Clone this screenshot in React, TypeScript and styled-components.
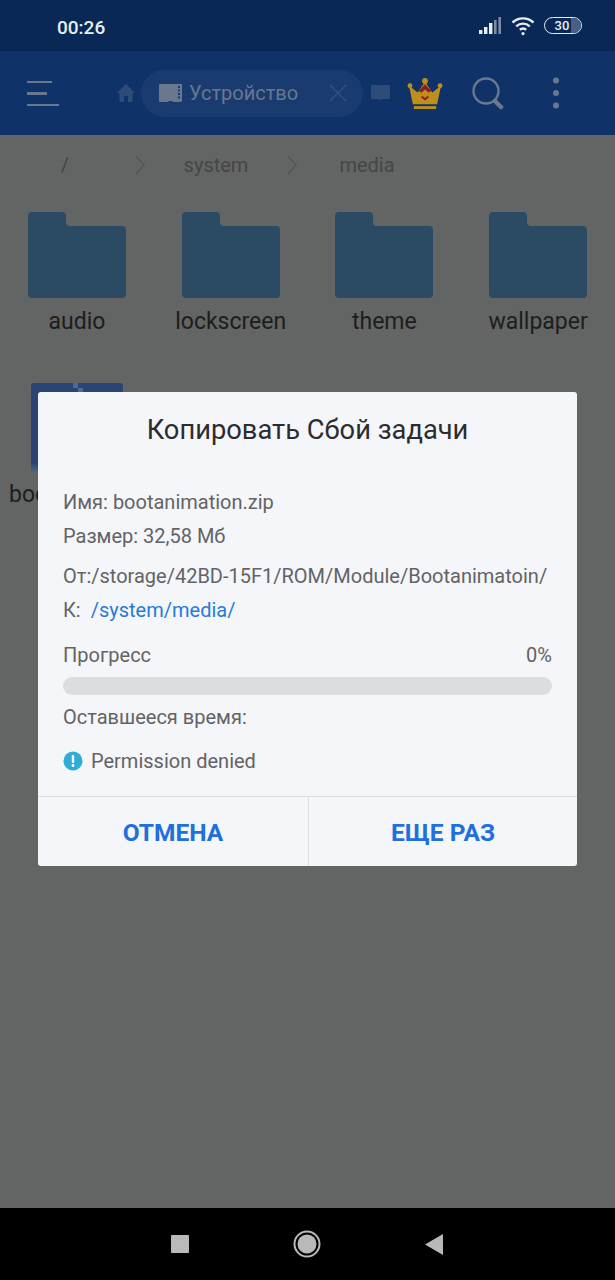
import React from "react";
import styled, { createGlobalStyle } from "styled-components";

const GlobalStyle = createGlobalStyle`
  html, body {
    margin: 0;
    padding: 0;
    background: #000;
  }
  * {
    box-sizing: border-box;
  }
`;

const FONT = `Roboto, "Liberation Sans", sans-serif`;

const Screen = styled.div`
  position: relative;
  width: 615px;
  height: 1280px;
  display: flex;
  flex-direction: column;
  overflow: hidden;
  font-family: ${FONT};
  background: #636564;
`;

const StatusBar = styled.div`
  height: 51px;
  flex: none;
  display: flex;
  align-items: center;
  justify-content: space-between;
  padding: 3px 33px 0 57px;
  background: #0a2855;
`;

const Clock = styled.span`
  font-size: 19px;
  font-weight: 500;
  color: #e8edf4;
`;

const StatusIcons = styled.div`
  display: flex;
  align-items: center;
  gap: 9px;
  margin-top: -3px;
`;

const Battery = styled.div`
  position: relative;
  width: 38px;
  height: 17px;
  border: 1.5px solid #e8edf4;
  border-radius: 9px;
  display: flex;
  align-items: center;
  justify-content: center;
  padding-right: 2px;
  font-size: 13px;
  font-weight: 500;
  color: #e8edf4;
  overflow: hidden;
`;

const BatteryEmpty = styled.span`
  position: absolute;
  top: 0;
  right: 0;
  bottom: 0;
  width: 10px;
  background: #4a5f80;
`;

const BatteryLabel = styled.span`
  position: relative;
`;

const AppBar = styled.div`
  height: 84px;
  flex: none;
  display: flex;
  align-items: center;
  padding: 0 0 0 27px;
  background: #0f3369;
`;

const MenuButton = styled.div`
  width: 32px;
  display: flex;
  flex-direction: column;
  gap: 9px;
  margin-right: 58px;
  margin-top: 1px;
`;

const MenuLine = styled.span<{ $w: number }>`
  display: block;
  height: 2.5px;
  width: ${({ $w }) => $w}px;
  background: #69778f;
`;

const DeviceTab = styled.div`
  width: 222px;
  height: 47px;
  margin: 0 8px 0 6px;
  border-radius: 24px;
  display: flex;
  align-items: center;
  padding-left: 18px;
  background: #1a3b6f;
  font-size: 20px;
  color: #69778f;
`;

const DeviceTabText = styled.span`
  margin-left: 7px;
  flex: 1;
`;

const DeviceClose = styled.svg`
  margin-right: 16px;
`;

const CrownIcon = styled.svg`
  margin-left: 17px;
`;

const SearchIcon = styled.svg`
  margin-left: 29px;
`;

const MoreIcon = styled.svg`
  margin-left: 48px;
`;

const PathBar = styled.div`
  display: grid;
  grid-template-columns: 130px 20px 132px 20px 130px;
  align-items: center;
  height: 60px;
  font-size: 20px;
  color: #454646;
`;

const Crumb = styled.span`
  justify-self: center;
`;

const Chevron = styled.svg`
  justify-self: center;
`;

const FileGrid = styled.div`
  display: grid;
  grid-template-columns: repeat(4, 98px);
  column-gap: 55.7px;
  row-gap: 46px;
  padding: 17px 0 0 28px;
`;

const FileCell = styled.div`
  position: relative;
  width: 98px;
  display: flex;
  flex-direction: column;
  align-items: center;
`;

const FileName = styled.span`
  margin-top: 9px;
  font-size: 23px;
  line-height: 30px;
  color: #1c1d1d;
  white-space: nowrap;
`;

const ArchiveThumb = styled.div`
  position: relative;
  width: 92px;
  height: 91px;
  border-radius: 3px;
  background: linear-gradient(#2a4574 0 88%, #5c6a80 100%);
`;

const ArchiveZipper = styled.svg`
  position: absolute;
  top: 0;
  left: 42px;
`;

const ArchiveName = styled(FileName)`
  align-self: flex-start;
  margin-left: -19px;
  margin-top: 6px;
`;

const NavBar = styled.div`
  position: absolute;
  left: 0;
  right: 0;
  bottom: 0;
  height: 72px;
  display: flex;
  align-items: center;
  justify-content: center;
  gap: 104px;
  padding-right: 2px;
  background: #000;
`;

const Dialog = styled.div`
  position: absolute;
  left: 38px;
  top: 392px;
  width: 539px;
  height: 474px;
  display: flex;
  flex-direction: column;
  border-radius: 3px;
  background: #f4f6f9;
`;

const DialogTitle = styled.div`
  height: 76px;
  flex: none;
  display: flex;
  align-items: center;
  justify-content: center;
  font-size: 27.3px;
  color: #2c2c2e;
`;

const DialogBody = styled.div`
  flex: 1;
  display: flex;
  flex-direction: column;
  padding: 17px 25px 0;
  font-size: 20px;
  color: #636366;
`;

const InfoRow = styled.div<{ $h: number }>`
  height: ${({ $h }) => $h}px;
  flex: none;
  display: flex;
  align-items: center;
  white-space: nowrap;
`;

const ProgressRow = styled(InfoRow)`
  justify-content: space-between;
  margin-top: 12px;
`;

const PathLink = styled.span`
  margin-left: 10px;
  color: #2a79d8;
`;

const ProgressTrack = styled.div`
  height: 18px;
  flex: none;
  border-radius: 9px;
  background: #dcdddf;
`;

const ErrorIcon = styled.svg`
  margin-right: 8px;
`;

const DialogActions = styled.div`
  height: 70px;
  flex: none;
  display: grid;
  grid-template-columns: 270px 1fr;
  border-top: 1px solid #dcdde0;
`;

const ActionButton = styled.div`
  display: flex;
  align-items: center;
  justify-content: center;
  padding-top: 2px;
  font-size: 24.5px;
  font-weight: 700;
  color: #1f6fdc;
  & + & {
    border-left: 1px solid #dcdde0;
  }
`;

function Folder() {
  return (
    <svg width="98" height="86" viewBox="0 0 98 86">
      <path
        d="M4 0h30q4 0 4 4v6q0 4 4 4h52q4 0 4 4v64q0 4-4 4H4q-4 0-4-4V4q0-4 4-4z"
        fill="#2a4b63"
      />
    </svg>
  );
}

function PathChevron() {
  return (
    <Chevron width="12" height="20" viewBox="0 0 12 20" fill="none" stroke="#555756" strokeWidth="1.5">
      <path d="M2 1l8 9-8 9" />
    </Chevron>
  );
}

const folders = ["audio", "lockscreen", "theme", "wallpaper"];

export default function App() {
  return (
    <>
      <GlobalStyle />
      <Screen>
        <StatusBar>
          <Clock>00:26</Clock>
          <StatusIcons>
            <svg width="24" height="18" viewBox="0 0 24 18">
              <rect x="1" y="13" width="3.4" height="4" fill="#e8edf4" />
              <rect x="6" y="10" width="3.4" height="7" fill="#e8edf4" />
              <rect x="11" y="6" width="3.4" height="11" fill="#e8edf4" />
              <rect x="16" y="3" width="2.6" height="14" fill="#7d8ca3" />
              <rect x="20.4" y="0" width="2.6" height="17" fill="#7d8ca3" />
            </svg>
            <svg width="24" height="20" viewBox="0 0 24 20" fill="none" stroke="#e8edf4" strokeWidth="2.4">
              <path d="M1.5 6.5C7.5 1 16.5 1 22.5 6.5" />
              <path d="M5.2 10.3c4-3.6 9.6-3.6 13.6 0" />
              <path d="M8.8 13.8c2-1.6 4.4-1.6 6.4 0" />
              <circle cx="12" cy="17.6" r="1.6" fill="#e8edf4" stroke="none" />
            </svg>
            <Battery>
              <BatteryEmpty />
              <BatteryLabel>30</BatteryLabel>
            </Battery>
          </StatusIcons>
        </StatusBar>

        <AppBar>
          <MenuButton>
            <MenuLine $w={25} />
            <MenuLine $w={20} />
            <MenuLine $w={32} />
          </MenuButton>
          <svg width="18" height="18" viewBox="0 0 18 18">
            <path d="M9 0l9 9h-2.4v9h-4.6v-6H7v6H2.4V9H0z" fill="#2f4c78" />
          </svg>
          <DeviceTab>
            <svg width="23" height="19" viewBox="0 0 23 19">
              <path d="M1 0h21q1 0 1 1v16q0 1-1 1h-8l-1-1h-3l-1 1H1q-1 0-1-1V1q0-1 1-1z" fill="#69778f" />
              <path d="M20 2v14" stroke="#1a3b6f" strokeWidth="2" strokeDasharray="2 1.5" />
            </svg>
            <DeviceTabText>Устройство</DeviceTabText>
            <DeviceClose width="18" height="18" viewBox="0 0 18 18" stroke="#33507c" strokeWidth="1.5">
              <path d="M1 1l16 16M17 1L1 17" />
            </DeviceClose>
          </DeviceTab>
          <svg width="19" height="16" viewBox="0 0 19 16">
            <path d="M1 0h17q1 0 1 1v12q0 1-1 1h-7l-1.5 1.5L8 14H1q-1 0-1-1V1q0-1 1-1z" fill="#2f4c78" />
          </svg>
          <CrownIcon width="36" height="33" viewBox="0 0 37 34">
            <path d="M6 28L2 9l9 7 7.5-11L26 16l9-7-4 19z" fill="#bd8f1e" />
            <path d="M12 14.500l6.500-7 6.500 7-3 1.500-3.500-3-3.500 3z" fill="#8b1e22" />
            <path d="M15 20l3.500 3 3.500-3" fill="none" stroke="#8b1e22" strokeWidth="2" />
            <rect x="7" y="30" width="23" height="3" fill="#bd8f1e" />
            <circle cx="18.5" cy="4" r="3" fill="#bd8f1e" />
            <circle cx="3" cy="9" r="2.5" fill="#bd8f1e" />
            <circle cx="34" cy="9" r="2.5" fill="#bd8f1e" />
          </CrownIcon>
          <SearchIcon width="32" height="33" viewBox="0 0 32 33" fill="none" stroke="#69778f">
            <circle cx="14" cy="14" r="12.5" strokeWidth="2.4" />
            <path d="M23 24l6 6" strokeWidth="4.5" strokeLinecap="round" />
          </SearchIcon>
          <MoreIcon width="8" height="32" viewBox="0 0 8 32" fill="#69778f">
            <circle cx="4" cy="3.5" r="3" />
            <circle cx="4" cy="16" r="3" />
            <circle cx="4" cy="28.5" r="3" />
          </MoreIcon>
        </AppBar>

        <PathBar>
          <Crumb>/</Crumb>
          <PathChevron />
          <Crumb>system</Crumb>
          <PathChevron />
          <Crumb>media</Crumb>
        </PathBar>

        <FileGrid>
          {folders.map((name) => (
            <FileCell key={name}>
              <Folder />
              <FileName>{name}</FileName>
            </FileCell>
          ))}
          <FileCell>
            <ArchiveThumb>
              <ArchiveZipper width="12" height="28" viewBox="0 0 12 28" fill="#4f6a94">
                <rect x="0" y="0" width="5" height="5" />
                <rect x="5" y="5" width="5" height="5" />
                <rect x="0" y="10" width="5" height="5" />
                <rect x="5" y="15" width="5" height="5" />
              </ArchiveZipper>
            </ArchiveThumb>
            <ArchiveName>boo</ArchiveName>
          </FileCell>
        </FileGrid>

        <Dialog>
          <DialogTitle>Копировать Сбой задачи</DialogTitle>
          <DialogBody>
            <InfoRow $h={34}>Имя: bootanimation.zip</InfoRow>
            <InfoRow $h={34}>Размер: 32,58 Мб</InfoRow>
            <InfoRow $h={46}>От:/storage/42BD-15F1/ROM/Module/Bootanimatoin/</InfoRow>
            <InfoRow $h={22}>
              К:<PathLink>/system/media/</PathLink>
            </InfoRow>
            <ProgressRow $h={44}>
              <span>Прогресс</span>
              <span>0%</span>
            </ProgressRow>
            <ProgressTrack />
            <InfoRow $h={44}>Оставшееся время:</InfoRow>
            <InfoRow $h={44}>
              <ErrorIcon width="20" height="20" viewBox="0 0 20 20">
                <circle cx="10" cy="10" r="9.5" fill="#2fadd8" />
                <rect x="8.8" y="4" width="2.4" height="8" rx="1" fill="#fff" />
                <circle cx="10" cy="14.5" r="1.4" fill="#fff" />
              </ErrorIcon>
              Permission denied
            </InfoRow>
          </DialogBody>
          <DialogActions>
            <ActionButton>ОТМЕНА</ActionButton>
            <ActionButton>ЕЩЕ РАЗ</ActionButton>
          </DialogActions>
        </Dialog>

        <NavBar>
          <svg width="18" height="18" viewBox="0 0 18 18">
            <rect width="18" height="18" rx="1" fill="#b9b9b9" />
          </svg>
          <svg width="28" height="28" viewBox="0 0 28 28">
            <circle cx="14" cy="14" r="12.5" fill="none" stroke="#b9b9b9" strokeWidth="2" />
            <circle cx="14" cy="14" r="9.5" fill="#b9b9b9" />
          </svg>
          <svg width="18" height="21" viewBox="0 0 18 21">
            <path d="M18 0v21L0 10.5z" fill="#b9b9b9" />
          </svg>
        </NavBar>
      </Screen>
    </>
  );
}
